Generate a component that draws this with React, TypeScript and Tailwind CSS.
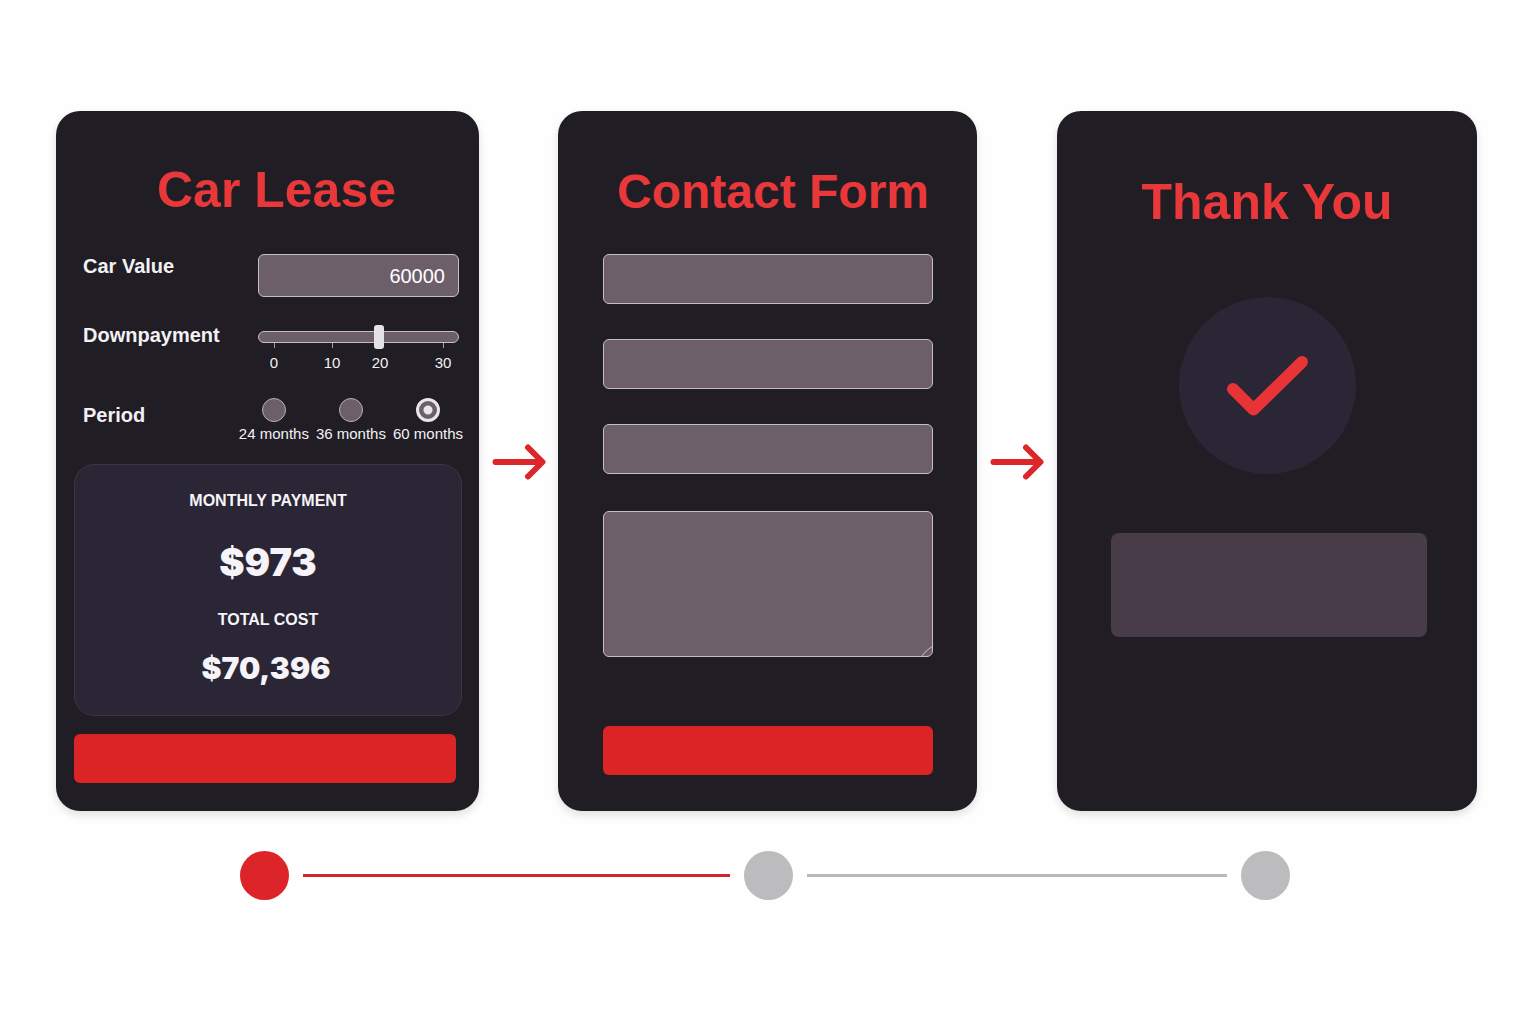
import * as React from 'react';
import clsx from 'clsx';

const MARKS = [
  { value: 0, className: '' },
  { value: 10, className: 'ml-[34px]' },
  { value: 20, className: 'ml-6' },
  { value: 30, className: 'ml-[39px]' },
];

const PERIODS = [24, 36, 60];

const FIELD = 'rounded-md border border-[#c6bdc5] bg-[#6d5f69] text-white outline-none';

interface CardProps {
  readonly className?: string;
  readonly children: React.ReactNode;
}

function Card({ className, children }: CardProps) {
  return (
    <section
      className={clsx(
        'flex flex-col rounded-3xl bg-[#201d25] shadow-[0_4px_8px_rgba(0,0,0,0.12)]',
        className
      )}
    >
      {children}
    </section>
  );
}

function Arrow() {
  return (
    <div className="flex justify-center pt-px">
      <svg width="54" height="36" viewBox="0 0 54 36" fill="none" aria-hidden="true">
        <path
          d="M3.5 18H50M36 3.5L50.5 18L36 32.5"
          stroke="#dc2629"
          strokeWidth="6"
          strokeLinecap="round"
          strokeLinejoin="round"
        />
      </svg>
    </div>
  );
}

function LeaseCard() {
  const [value, setValue] = React.useState('60000');
  const [downpayment, setDownpayment] = React.useState(20);
  const [period, setPeriod] = React.useState(60);

  return (
    <Card className="pt-[49px] pb-7 pl-[18px]">
      <h2 className="text-center text-[50px] leading-[60px] font-bold text-[#e8383a]">Car Lease</h2>

      <div className="mt-[34px] flex items-start justify-between pr-5 pl-[9px]">
        <label htmlFor="car-value" className="text-xl leading-6 font-bold">
          Car Value
        </label>
        <input
          id="car-value"
          type="text"
          inputMode="numeric"
          value={value}
          onChange={(e) => setValue(e.target.value)}
          className={clsx(FIELD, 'h-[43px] w-[201px] px-[13px] pt-[2px] text-right text-xl')}
        />
      </div>

      <div className="mt-[26px] flex items-start justify-between pr-5 pl-[9px]">
        <label htmlFor="downpayment" className="text-xl leading-6 font-bold">
          Downpayment
        </label>
        <div className="w-[201px] pt-2">
          <input
            id="downpayment"
            type="range"
            min={0}
            max={33}
            value={downpayment}
            onChange={(e) => setDownpayment(Number(e.target.value))}
            className="block h-3 w-full appearance-none rounded-md border border-[#c6bdc5] bg-[#6d5f69] outline-none [&::-webkit-slider-thumb]:h-6 [&::-webkit-slider-thumb]:w-[10px] [&::-webkit-slider-thumb]:appearance-none [&::-webkit-slider-thumb]:rounded-[3px] [&::-webkit-slider-thumb]:bg-[#e4e2e4]"
          />
          <div className="flex pl-1 text-[15px] leading-5">
            {MARKS.map((mark) => (
              <div key={mark.value} className={clsx('flex w-6 flex-col items-center gap-[5px]', mark.className)}>
                <span className={clsx('h-[5px] w-px bg-[#a79fa8]', mark.value === downpayment && 'opacity-0')} />
                <span>{mark.value}</span>
              </div>
            ))}
          </div>
        </div>
      </div>

      <fieldset className="mt-[25px] flex items-start justify-between pr-4 pl-[9px]">
        <legend className="float-left pt-[5px] text-xl leading-6 font-bold">Period</legend>
        <div className="flex flex-1 justify-end gap-[7px]">
          {PERIODS.map((months) => (
            <label key={months} className="flex flex-col items-center gap-[2px] text-[15px] leading-5 whitespace-nowrap">
              <input
                type="radio"
                name="period"
                checked={period === months}
                onChange={() => setPeriod(months)}
                className="size-6 appearance-none rounded-full border border-[#b8adb7] bg-[#6d5f69] checked:border-[3px] checked:border-[#e9e6e9] checked:bg-[radial-gradient(circle,#e9e6e9_4px,#6d5f69_5px)]"
              />
              {months} months
            </label>
          ))}
        </div>
      </fieldset>

      <div className="mt-5 mr-[17px] flex flex-col items-center rounded-[20px] border border-[#3a3545] bg-[#2b2635] pt-6 pb-[27px] text-[#f6f4f8]">
        <h3 className="leading-6 font-bold">MONTHLY PAYMENT</h3>
        <p className="mt-[29px] font-['Inter','Liberation_Sans',sans-serif] text-[38px] leading-10 font-black">$973</p>
        <h3 className="mt-[26px] leading-6 font-bold">TOTAL COST</h3>
        <p className="mt-4 pr-1 font-['Inter','Liberation_Sans',sans-serif] text-[30px] leading-10 font-black">$70,396</p>
      </div>

      <button type="button" aria-label="Continue" className="mt-[18px] mr-[23px] h-[49px] rounded-md bg-[#dc2427]" />
    </Card>
  );
}

function ContactCard() {
  return (
    <Card className="pt-[51px] pr-11 pb-9 pl-[45px]">
      <h2 className="pl-[10px] text-center text-5xl leading-[60px] font-bold whitespace-nowrap text-[#e8383a]">
        Contact Form
      </h2>
      <form className="mt-8 flex flex-col" onSubmit={(e) => e.preventDefault()}>
        <div className="flex flex-col gap-[35px]">
          <input type="text" aria-label="Name" className={clsx(FIELD, 'h-[50px] px-3')} />
          <input type="email" aria-label="Email" className={clsx(FIELD, 'h-[50px] px-3')} />
          <input type="tel" aria-label="Phone" className={clsx(FIELD, 'h-[50px] px-3')} />
        </div>
        <div className="relative mt-[37px]">
          <textarea aria-label="Message" className={clsx(FIELD, 'block h-[146px] w-full resize-none p-3')} />
          <svg className="absolute right-0 bottom-0" width="12" height="12" viewBox="0 0 12 12" fill="none" aria-hidden="true">
            <path d="M1 11.5C3 7.5 7 4 11.5 1.5" stroke="#c6bdc5" />
          </svg>
        </div>
        <button type="submit" aria-label="Send" className="mt-[69px] h-[49px] rounded-md bg-[#dc2427]" />
      </form>
    </Card>
  );
}

function ThankYouCard() {
  return (
    <Card className="pt-[61px]">
      <h2 className="text-center text-[50px] leading-[60px] font-bold text-[#e8383a]">Thank You</h2>
      <div className="mt-[65px] flex size-[177px] items-center justify-center self-center rounded-full bg-[#2b2635]">
        <svg width="84" height="64" viewBox="0 0 84 64" fill="none" aria-hidden="true">
          <path
            d="M8 35L28.5 55.5L77 8"
            stroke="#e93437"
            strokeWidth="12"
            strokeLinecap="round"
            strokeLinejoin="round"
          />
        </svg>
      </div>
      <div className="mt-[59px] mr-[50px] ml-[54px] h-[104px] rounded-lg bg-[#493c49]" />
    </Card>
  );
}

function Steps() {
  return (
    <div className="mt-10 grid grid-cols-[49px_455fr_49px_448fr_49px] items-center pr-[246px] pl-[240px]">
      <span className="size-[49px] rounded-full bg-[#dd2529]" />
      <span className="mx-[14px] h-[3px] bg-[#d1262a]" />
      <span className="size-[49px] rounded-full bg-[#bcbcbe]" />
      <span className="mx-[14px] h-[3px] bg-[#b9b9bb]" />
      <span className="size-[49px] rounded-full bg-[#bcbcbe]" />
    </div>
  );
}

export default function App() {
  return (
    <main className="min-h-screen bg-[#fefefe] pt-[111px] font-['Liberation_Sans',Arial,sans-serif] text-[#f3f1f4]">
      <div className="grid grid-cols-[423fr_79fr_419fr_80fr_420fr] items-center pr-[59px] pl-14 [&>section]:self-stretch">
        <LeaseCard />
        <Arrow />
        <ContactCard />
        <Arrow />
        <ThankYouCard />
      </div>
      <Steps />
    </main>
  );
}
